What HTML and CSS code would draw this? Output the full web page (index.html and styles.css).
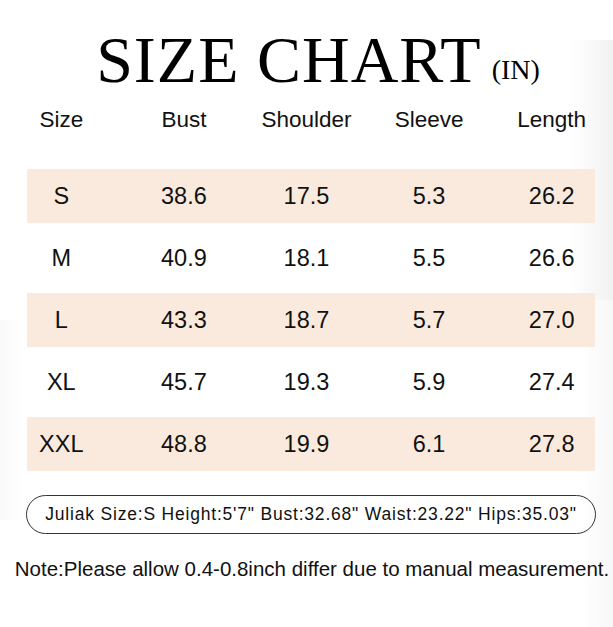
FILE: index.html
```html
<!DOCTYPE html>
<html lang="en">
<head>
<meta charset="utf-8">
<title>Size Chart</title>
<link rel="stylesheet" href="styles.css">
</head>
<body>
<main class="page">
  <h1 class="title">SIZE CHART<span class="unit">(IN)</span></h1>
  <div class="row head">
    <span>Size</span><span>Bust</span><span>Shoulder</span><span>Sleeve</span><span>Length</span>
  </div>
  <div class="table">
    <div class="row shade"><span>S</span><span>38.6</span><span>17.5</span><span>5.3</span><span>26.2</span></div>
    <div class="row"><span>M</span><span>40.9</span><span>18.1</span><span>5.5</span><span>26.6</span></div>
    <div class="row shade"><span>L</span><span>43.3</span><span>18.7</span><span>5.7</span><span>27.0</span></div>
    <div class="row"><span>XL</span><span>45.7</span><span>19.3</span><span>5.9</span><span>27.4</span></div>
    <div class="row shade"><span>XXL</span><span>48.8</span><span>19.9</span><span>6.1</span><span>27.8</span></div>
  </div>
  <div class="pill">Juliak Size:S Height:5'7" Bust:32.68" Waist:23.22" Hips:35.03"</div>
  <p class="note">Note:Please allow 0.4-0.8inch differ due to manual measurement.</p>
</main>
</body>
</html>
```
FILE: styles.css
```css
html, body {
  margin: 0;
  padding: 0;
}
body {
  width: 613px;
  height: 627px;
  overflow: hidden;
  background:
    linear-gradient(to right, rgba(255,255,255,0) 0, rgba(238,238,238,0.8) 100%) 570px 40px / 43px 260px no-repeat,
    linear-gradient(to right, rgba(255,255,255,0) 0, rgba(244,244,244,0.7) 100%) 580px 300px / 33px 327px no-repeat,
    linear-gradient(to right, rgba(240,240,240,0.35) 0, rgba(255,255,255,0) 100%) 0 320px / 26px 200px no-repeat,
    #ffffff;
  color: #111;
  font-family: "Liberation Sans", Arial, sans-serif;
}
.page {
  display: flex;
  flex-direction: column;
  padding-top: 27px;
}
.title {
  margin: 0;
  font-family: "Liberation Serif", "Times New Roman", serif;
  font-weight: normal;
  font-size: 66px;
  line-height: 66px;
  letter-spacing: 1px;
  text-align: center;
  padding-left: 23px;
  color: #000;
}
.unit {
  font-size: 28px;
  line-height: 1;
  letter-spacing: 0;
  margin-left: 10px;
  position: relative;
  top: -3px;
}
.row {
  display: grid;
  grid-template-columns: repeat(5, 1fr);
  align-items: center;
  justify-items: center;
}
.head {
  margin-top: 12px;
  height: 30px;
  font-size: 22.5px;
  line-height: 30px;
  margin-bottom: 34px;
}
.table {
  display: flex;
  flex-direction: column;
  gap: 8px;
}
.table .row {
  height: 54px;
  font-size: 23.5px;
  line-height: 54px;
}
.table .row.shade {
  background: linear-gradient(#faeadd, #faeadd) 27px 0 / 568px 100% no-repeat;
}
.pill {
  margin: 24px 17px 0 26px;
  height: 37px;
  border: 1.5px solid #333;
  border-radius: 20px;
  display: flex;
  align-items: center;
  justify-content: center;
  font-size: 17.5px;
  letter-spacing: 0.8px;
  color: #111;
}
.note {
  margin: 22px 0 0;
  font-size: 20.5px;
  line-height: 26px;
  text-align: center;
  padding-left: 11px;
}
```
